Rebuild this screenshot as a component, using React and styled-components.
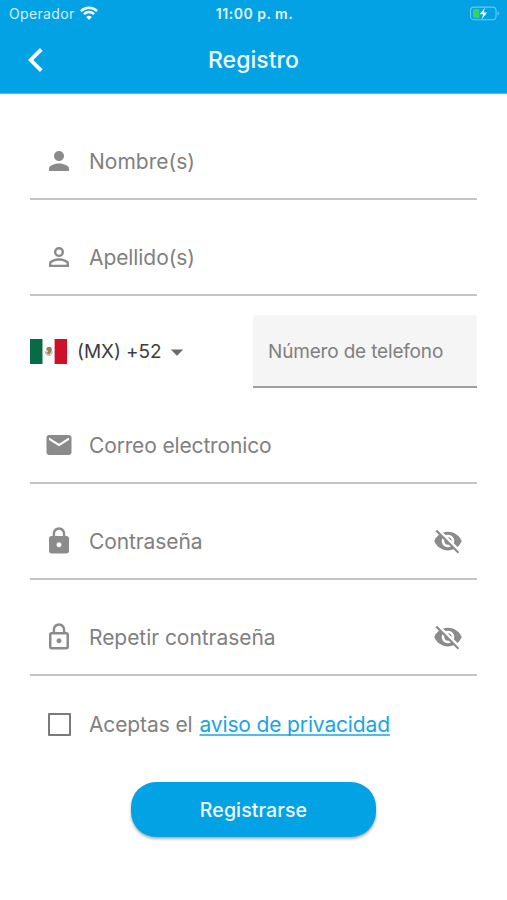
import React from "react";
import styled, { createGlobalStyle } from "styled-components";
import {
  MdPerson,
  MdPersonOutline,
  MdEmail,
  MdLock,
  MdLockOutline,
  MdVisibilityOff,
  MdArrowDropDown,
} from "react-icons/md";

const GlobalStyle = createGlobalStyle`
  * { box-sizing: border-box; }
  body { margin: 0; background: #fff; }
`;

const Screen = styled.div`
  width: 507px;
  height: 900px;
  overflow: hidden;
  display: flex;
  flex-direction: column;
  background: #fff;
  font-family: Inter, "Liberation Sans", sans-serif;
`;

const TopBar = styled.header`
  height: 94px;
  flex: none;
  background: #02a2e5;
  color: #fff;
  border-bottom: 1px solid #4fbeed;
`;

const StatusBar = styled.div`
  height: 28px;
  padding: 0 7px 2px 9px;
  display: grid;
  grid-template-columns: 1fr auto 1fr;
  align-items: center;
`;

const Carrier = styled.div`
  display: flex;
  align-items: center;
  gap: 5px;
  font-size: 14px;
  letter-spacing: 0.35px;
  color: #d3effb;
`;

const Clock = styled.div`
  font-size: 14px;
  font-weight: 600;
  letter-spacing: 0.5px;
  color: #e2f5fd;
`;

const Battery = styled.svg`
  justify-self: end;
  display: block;
`;

const NavBar = styled.nav`
  height: 64px;
  padding: 0 24px;
  display: grid;
  grid-template-columns: 1fr auto 1fr;
  align-items: center;
`;

const Title = styled.h1`
  margin: 0;
  font-size: 23px;
  font-weight: 500;
  letter-spacing: 0.05px;
  color: #f2fbff;
`;

const Form = styled.form`
  padding: 30px 30px 0;
  display: flex;
  flex-direction: column;
  gap: 20px;
`;

const Field = styled.label`
  height: 76px;
  padding: 0 14px;
  display: flex;
  align-items: center;
  border-bottom: 2px solid #c4c4c4;
  color: #8b8b8b;
  svg { flex: none; }
`;

const FieldText = styled.span`
  flex: 1;
  margin-left: 15px;
  padding-top: 2px;
  font-size: 21px;
  line-height: 26px;
  letter-spacing: ${(p) => p.$spacing || 0}px;
  color: #808080;
  white-space: nowrap;
`;

const PhoneRow = styled.div`
  height: 73px;
  margin: -1px 0 0;
  display: flex;
  justify-content: space-between;
  align-items: center;
`;

const Country = styled.div`
  display: flex;
  align-items: center;
  font-size: 19px;
  letter-spacing: -0.05px;
  color: #3c3c3c;
  svg { flex: none; }
`;

const CountryCode = styled.span`
  margin: 0 0 0 10px;
  white-space: nowrap;
`;

const PhoneBox = styled.div`
  width: 224px;
  height: 73px;
  padding: 2px 15px 0;
  display: flex;
  align-items: center;
  border-radius: 4px 4px 0 0;
  border-bottom: 2px solid #a0a0a0;
  background: #f5f5f5;
  color: #808080;
  font-size: 19px;
  letter-spacing: -0.17px;
  white-space: nowrap;
`;

const Consent = styled.label`
  height: 24px;
  margin-top: 16px;
  padding-left: 18px;
  display: flex;
  align-items: center;
  color: #808080;
  font-size: 21px;
  letter-spacing: -0.12px;
  white-space: nowrap;
`;

const CheckBox = styled.span`
  width: 23px;
  height: 23px;
  margin-right: 18px;
  flex: none;
  border: 2px solid #7a7a7a;
  border-radius: 1px;
`;

const Link = styled.a`
  margin-left: 7px;
  color: #1aa5e2;
  letter-spacing: -0.15px;
  text-decoration: underline #4fbcea 2px;
  text-underline-offset: 2px;
  text-decoration-skip-ink: none;
`;

const Submit = styled.button`
  align-self: center;
  width: 245px;
  height: 55px;
  margin-top: 26px;
  border: 0;
  border-radius: 25px;
  background: #02a2e5;
  color: #f2fbff;
  font: 500 19.5px Inter, sans-serif;
  letter-spacing: 0.12px;
  box-shadow: 0 2px 3px rgba(0, 0, 0, 0.32);
`;

function WifiIcon() {
  return (
    <svg width="18" height="14" viewBox="0 0 18 14" fill="none" stroke="#fff" strokeWidth="2.3">
      <path d="M0.9 5.1a11.5 11.5 0 0 1 16.2 0" />
      <path d="M3.9 8.1a7.3 7.3 0 0 1 10.2 0" />
      <path d="M9 14 6.2 11.1a4 4 0 0 1 5.6 0z" fill="#fff" stroke="none" />
    </svg>
  );
}

function BatteryIcon() {
  return (
    <Battery width="30" height="15" viewBox="0 0 31 15">
      <rect x="0.6" y="0.9" width="26.3" height="13" rx="3.6" fill="none" stroke="#6fcbf1" strokeWidth="1.1" />
      <path d="M28.5 5.2v4.6c2-.9 2-3.7 0-4.6z" fill="#6fcbf1" />
      <path d="M5 2.8h4.6v9.4H5a2 2 0 0 1-2-2V4.8a2 2 0 0 1 2-2z" fill="#35d45b" />
      <path d="M15.4 1.5 10 8.4h3.5l-1.3 5 5.5-7h-3.6z" fill="#fff" />
    </Battery>
  );
}

function MexicoFlag() {
  return (
    <svg width="37" height="25" viewBox="0 0 37 25">
      <path fill="#fff" d="M0 0h37v25H0z" />
      <path fill="#086b48" d="M0 0h12.5v25H0z" />
      <path fill="#ce1128" d="M24.6 0H37v25H24.6z" />
      <path d="M15.2 12c.2 3.4 2 4.6 3.7 4.5 2 0 3.2-1.7 3.3-4" fill="#e3e4d6" stroke="#b4bda2" strokeWidth="1" />
      <path d="M16.8 8.8c1.7-2 4.6-1.2 5 1 .3 2.2-.6 4.2-2.5 5l-2.2-1 1-1.7-2-1.2z" fill="#9b7f55" />
      <path d="M16.5 13.7 20 15.3" stroke="#6e8a66" strokeWidth="1.2" />
    </svg>
  );
}

function TextField({ icon: Icon, label, spacing, secret }) {
  return (
    <Field>
      <Icon size={30} />
      <FieldText $spacing={spacing}>{label}</FieldText>
      {secret && <MdVisibilityOff size={30} />}
    </Field>
  );
}

export default function App() {
  return (
    <Screen>
      <GlobalStyle />
      <TopBar>
        <StatusBar>
          <Carrier>
            Operador
            <WifiIcon />
          </Carrier>
          <Clock>11:00 p. m.</Clock>
          <BatteryIcon />
        </StatusBar>
        <NavBar>
          <svg width="24" height="26" viewBox="0 0 24 26" fill="none" stroke="#fff" strokeWidth="3.8">
            <path d="M17.3 2.4 6.7 13l10.6 10.6" />
          </svg>
          <Title>Registro</Title>
        </NavBar>
      </TopBar>
      <Form>
        <TextField icon={MdPerson} label="Nombre(s)" spacing={0} />
        <TextField icon={MdPersonOutline} label="Apellido(s)" spacing={-0.08} />
        <PhoneRow>
          <Country>
            <MexicoFlag />
            <CountryCode>(MX) +52</CountryCode>
            <MdArrowDropDown size={30} color="#6b6b6b" />
          </Country>
          <PhoneBox>Número de telefono</PhoneBox>
        </PhoneRow>
        <TextField icon={MdEmail} label="Correo electronico" spacing={-0.15} />
        <TextField icon={MdLock} label="Contraseña" spacing={-0.1} secret />
        <TextField icon={MdLockOutline} label="Repetir contraseña" spacing={-0.05} secret />
        <Consent>
          <CheckBox />
          Aceptas el <Link>aviso de privacidad</Link>
        </Consent>
        <Submit type="button">Registrarse</Submit>
      </Form>
    </Screen>
  );
}
